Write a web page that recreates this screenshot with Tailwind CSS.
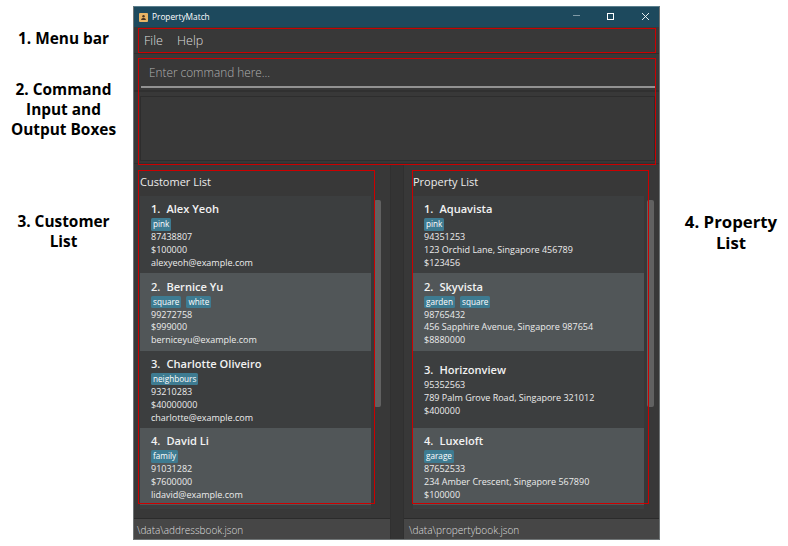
<!DOCTYPE html>
<html lang="en">
<head>
<meta charset="utf-8">
<title>PropertyMatch</title>
<script src="https://cdn.jsdelivr.net/npm/@tailwindcss/browser@4"></script>
</head>
<body class="bg-white">
<div class="relative flex w-[788px] h-[546px] overflow-hidden font-['Open_Sans','Noto_Sans',sans-serif]">
  <!-- left notes -->
  <aside class="w-[133px] shrink-0 flex flex-col text-center text-black font-bold text-[15.4px] leading-[20px] pt-[29px] pr-[6px] whitespace-nowrap">
    <p>1. Menu bar</p>
    <p class="mt-[31px]">2. Command<br>Input and<br>Output Boxes</p>
    <p class="mt-[72px]">3. Customer<br>List</p>
  </aside>

  <!-- application window -->
  <main class="mt-[6px] w-[527px] h-[534px] shrink-0 flex flex-col bg-[#383838] border border-[#6f7475] border-t-[#5b7f8d]">
    <header class="h-[20px] shrink-0 bg-[#1d495d] flex items-center pl-[5px] pr-[3px] text-white">
      <svg class="w-[9px] h-[9px]" viewBox="0 0 9 9"><rect width="9" height="9" rx="1" fill="#e9b565"/><circle cx="4.5" cy="3.2" r="1.2" fill="#4a3520"/><path d="M2.2 7V6.2Q2.6 4.9 4.5 4.9T6.8 6.2V7Z" fill="#4a3520"/></svg>
      <h1 class="ml-[4px] text-[8.3px] leading-[18px] flex-1">PropertyMatch</h1>
      <svg class="w-[90px] h-[20px]" viewBox="0 0 90 20" fill="none"><path d="M7 8.5h7" stroke="#7f9aa6"/><rect x="41.5" y="6.5" width="6" height="6" stroke="#fff"/><path d="M76 6l7 7M83 6l-7 7" stroke="#e6edf0"/></svg>
    </header>
    <nav class="h-[27px] shrink-0 flex items-center pt-[3px] pl-[10px] gap-[14px] text-[12.6px] font-light text-[#dedede] border-b border-[#2e2e2e]">
      <span>File</span><span>Help</span>
    </nav>
    <section class="h-[38px] shrink-0 border-b-2 border-[#303030] pl-[7px] pr-[4px]">
      <div class="h-[34px] border-b-2 border-[#929292] pl-[8px] pt-[8px] text-[11.8px] leading-[20px] font-light text-[#b0b0b0]">Enter command here...</div>
    </section>
    <section class="h-[72px] shrink-0 border-b border-[#303030] pl-[6px] pr-[4px] pt-[4px]">
      <div class="h-[65px] border border-[#2d2d2d]"></div>
    </section>
    <div class="flex flex-1 min-h-0">
      <section class="w-[256px] flex flex-col">
        <div class="flex-1 min-h-0 pl-[6px] flex flex-col">
          <h2 class="h-[32px] pt-[8px] text-[11px] leading-[20px] text-[#ececec]">Customer List</h2>
          <div class="flex">
            <div id="customers" class="w-[231px] h-[313px] overflow-hidden"></div>
            <div class="ml-[3px] mt-[4px] w-[7px] h-[207px] rounded-[2px] bg-[#616161]"></div>
          </div>
        </div>
        <footer class="h-[21px] border-t border-[#2b2b2b] bg-[#464646] pl-[3px] text-[10px] leading-[22px] font-light text-[#dedede]">\data\addressbook.json</footer>
      </section>
      <div class="w-[14px] bg-[#343434] border-x border-[#303030]"></div>
      <section class="flex-1 flex flex-col">
        <div class="flex-1 min-h-0 pl-[9px] flex flex-col">
          <h2 class="h-[32px] pt-[8px] text-[11px] leading-[20px] text-[#ececec]">Property List</h2>
          <div class="flex">
            <div id="properties" class="w-[231px] h-[313px] overflow-hidden"></div>
            <div class="ml-[3px] mt-[4px] w-[7px] h-[207px] rounded-[2px] bg-[#616161]"></div>
          </div>
        </div>
        <footer class="h-[21px] border-t border-[#2b2b2b] bg-[#464646] pl-[5px] text-[10.1px] leading-[22px] font-light text-[#dedede]">\data\propertybook.json</footer>
      </section>
    </div>
  </main>

  <!-- right note -->
  <aside class="flex-1 pt-[211px] pl-[14px] text-center text-black font-bold text-[16.8px] leading-[21px] whitespace-nowrap">4. Property<br>List</aside>

  <!-- highlight frames -->
  <div class="absolute left-[138px] top-[28px] w-[518px] h-[25px] border border-[#cc0000]"></div>
  <div class="absolute left-[138px] top-[58px] w-[518px] h-[107px] border border-[#cc0000]"></div>
  <div class="absolute left-[138px] top-[170px] w-[237px] h-[334px] border border-[#cc0000]"></div>
  <div class="absolute left-[412px] top-[170px] w-[237px] h-[334px] border border-[#cc0000]"></div>
</div>
<script>
const customers = [
  ["Alex Yeoh", ["pink"], ["87438807", "$100000", "alexyeoh@example.com"]],
  ["Bernice Yu", ["square", "white"], ["99272758", "$999000", "berniceyu@example.com"]],
  ["Charlotte Oliveiro", ["neighbours"], ["93210283", "$40000000", "charlotte@example.com"]],
  ["David Li", ["family"], ["91031282", "$7600000", "lidavid@example.com"]]
];
const properties = [
  ["Aquavista", ["pink"], ["94351253", "123 Orchid Lane, Singapore 456789", "$123456"]],
  ["Skyvista", ["garden", "square"], ["98765432", "456 Sapphire Avenue, Singapore 987654", "$8880000"]],
  ["Horizonview", [], ["95352563", "789 Palm Grove Road, Singapore 321012", "$400000"]],
  ["Luxeloft", ["garage"], ["87652533", "234 Amber Crescent, Singapore 567890", "$100000"]]
];
function card([name, tags, lines], i) {
  const tagRow = tags.length
    ? `<div class="flex gap-[5px] h-[13px]">${tags.map(t => `<span class="bg-[#3e7b91] text-white rounded-[1.5px] px-[2px] h-[12.5px] text-[8.2px] leading-[12.5px]">${t}</span>`).join("")}</div>` : "";
  return `<article class="h-[77.25px] pt-[1px] pl-[11px] flex flex-col justify-center whitespace-nowrap ${i % 2 ? "bg-[#515658]" : "bg-[#3c3e3f]"}">
    <h3 class="flex gap-[6px] h-[18px] text-[11.1px] leading-[17px] font-semibold text-[#f2f2f2]"><span>${i + 1}.</span><span>${name}</span></h3>${tagRow}
    ${lines.map(l => `<p class="text-[9px] leading-[12.9px] text-[#ececec]">${l}</p>`).join("")}</article>`;
}
const tail = '<div class="h-[4px] bg-[#3c3e3f]"></div>';
document.getElementById("customers").innerHTML = customers.map(card).join("") + tail;
document.getElementById("properties").innerHTML = properties.map(card).join("") + tail;
</script>
</body>
</html>
